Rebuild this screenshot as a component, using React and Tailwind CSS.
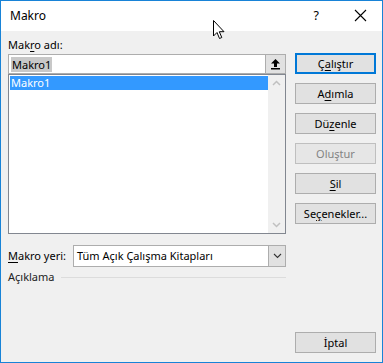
import React from 'react';

const font = { fontFamily: '"Noto Sans", "Open Sans", sans-serif' };

function Btn({ children, primary, disabled, className = '' }) {
  return (
    <button
      className={`h-[21px] w-[81px] flex items-center justify-center text-[11px] leading-none bg-[#e1e1e1] ${
        primary ? 'border-2 border-[#0078d7]' : 'border border-[#adadad]'
      } ${disabled ? 'text-[#838383] bg-[#e6e6e6] border-[#bfbfbf]' : 'text-black'} ${className}`}
    >
      {children}
    </button>
  );
}

function U({ children }) {
  return <span className="underline underline-offset-[2px]">{children}</span>;
}

function Cursor() {
  return (
    <svg className="absolute left-[212px] top-[19px]" width="14" height="21" viewBox="0 0 14 21">
      <path d="M0.5 0.5 L0.5 16 L4 12.5 L6.5 18.5 L8.8 17.5 L6.3 11.7 L11 11.7 Z" fill="#fff" stroke="#000" strokeWidth="1" />
    </svg>
  );
}

export default function App() {
  return (
    <div className="relative w-[383px] h-[363px] border border-[#1883d7] flex flex-col bg-[#f0f0f0] text-black" style={font}>
      {/* Title bar */}
      <div className="h-[30px] bg-white flex items-center pl-[9px] pr-[15px]">
        <span className="text-[12px] flex-1">Makro</span>
        <span className="text-[12.5px] mr-[35px]">?</span>
        <svg width="13" height="13" viewBox="0 0 13 13" className="mb-[1px]">
          <path d="M1 1 L12 12 M12 1 L1 12" stroke="#000" strokeWidth="1.1" />
        </svg>
      </div>
      <Cursor />

      {/* Body */}
      <div className="flex-1 flex pl-[7px] pr-[6px] pt-[5px] pb-[9px] gap-[9px]">
        {/* Left column */}
        <div className="w-[278px] flex flex-col">
          <div className="text-[11px] leading-[17px] h-[17px]">
            Mak<U>r</U>o adı:
          </div>
          {/* Name input */}
          <div className="mt-[1px] h-[20px] border border-[#adadad] bg-white flex">
            <div className="flex-1 flex items-center pl-[2px]">
              <span className="bg-[#c8c8c8] text-[11px] leading-[15px] px-[1px]">Makro1</span>
            </div>
            <div className="w-[20px] bg-[#e1e1e1] border-l border-[#adadad] flex items-center justify-center">
              <svg width="11" height="12" viewBox="0 0 11 12">
                <path d="M5.5 1 L10 5.5 L7 5.5 L7 9 L4 9 L4 5.5 L1 5.5 Z" fill="#000" />
                <rect x="1" y="10" width="9" height="1.5" fill="#000" />
              </svg>
            </div>
          </div>
          {/* List */}
          <div className="h-[160px] border border-[#828790] bg-white flex">
            <div className="flex-1 pt-[1px] pl-[1px]">
              <div className="h-[14px] bg-[#3399ff] text-white text-[11px] leading-[14px] pl-[1px]">Makro1</div>
            </div>
            <div className="w-[17px] bg-[#f0f0f0] flex flex-col justify-between items-center py-[5px]">
              <svg width="9" height="6" viewBox="0 0 9 6">
                <path d="M1 5 L4.5 1.5 L8 5" stroke="#c0c0c0" strokeWidth="1.5" fill="none" />
              </svg>
              <svg width="9" height="6" viewBox="0 0 9 6">
                <path d="M1 1 L4.5 4.5 L8 1" stroke="#c0c0c0" strokeWidth="1.5" fill="none" />
              </svg>
            </div>
          </div>
          {/* Makro yeri */}
          <div className="mt-[11px] flex items-center">
            <span className="text-[11px] w-[65px]">
              <U>M</U>akro yeri:
            </span>
            <div className="flex-1 h-[22px] border border-[#adadad] bg-white flex">
              <div className="flex-1 text-[11px] leading-[20px] pl-[3px]">Tüm Açık Çalışma Kitapları</div>
              <div className="w-[17px] bg-[#e1e1e1] border-l border-[#adadad] flex items-center justify-center">
                <svg width="9" height="6" viewBox="0 0 9 6">
                  <path d="M1 1 L4.5 4.5 L8 1" stroke="#333" strokeWidth="1.1" fill="none" />
                </svg>
              </div>
            </div>
          </div>
          {/* Açıklama */}
          <div className="mt-[2px] flex items-center gap-[6px]">
            <span className="text-[11px] text-[#222]">Açıklama</span>
            <div className="flex-1 h-px bg-[#dcdcdc]" />
          </div>
        </div>

        {/* Right column */}
        <div className="flex-1 flex flex-col items-end pt-[17px]">
          <div className="flex flex-col gap-[9px]">
            <Btn primary>Ç<U>a</U>lıştır</Btn>
            <Btn>A<U>d</U>ımla</Btn>
            <Btn>Dü<U>z</U>enle</Btn>
            <Btn disabled>Oluştur</Btn>
            <Btn><U>S</U>il</Btn>
            <Btn>Se<U>ç</U>enekler...</Btn>
          </div>
          <div className="flex-1" />
          <Btn className="w-[75px]">İptal</Btn>
        </div>
      </div>
    </div>
  );
}
